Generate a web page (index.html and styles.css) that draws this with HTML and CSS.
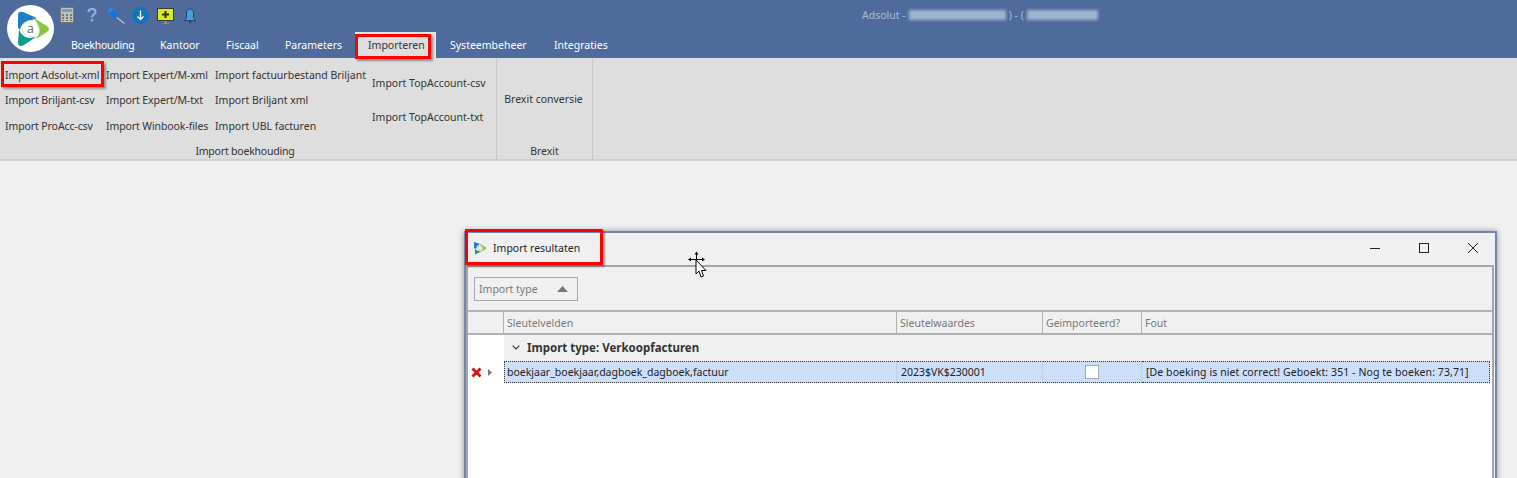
FILE: index.html
```html
<!DOCTYPE html>
<html lang="nl">
<head>
<meta charset="utf-8">
<title>Adsolut</title>
<link rel="stylesheet" href="styles.css">
</head>
<body>
<div class="app">
  <header class="header">
    <div class="logo">
      <svg width="47" height="47" viewBox="0 0 47 47">
        <circle cx="23.500" cy="23.500" r="23.500" fill="#fff"/>
        <path d="M11 10 Q11 6 16 7 L30 13 Q26 15 21 16 Q14 18 13 25 L11 23Z" fill="#1f7fc0"/>
        <path d="M25 12 L40 21 Q44 24 40 27 L29 34 Q34 27 32 22 Q30 16 25 12Z" fill="#8cc63f"/>
        <path d="M12 25 Q15 32 23 33 Q28 33 32 30 L17 40 Q11 43 11 37Z" fill="#0f9b8e"/>
        <circle cx="23.500" cy="23.500" r="8" fill="#fff" stroke="#cfe6e6" stroke-width="1"/>
        <text x="23.500" y="27.500" class="logo-a">a</text>
      </svg>
    </div>
    <div class="header-body">
      <div class="topline">
        <div class="quick">
          <svg class="qi-calc" width="14" height="16" viewBox="0 0 14 16"><rect x=".5" y=".5" width="13" height="15" fill="#c2c2bc" stroke="#77766f"/><rect x="2" y="2" width="10" height="3" fill="#6fa0cf"/><path d="M2 7h2v2H2zM6 7h2v2H6zM10 7h2v2h-2zM2 10h2v2H2zM6 10h2v2H6zM10 10h2v2h-2zM2 13h2v1H2zM6 13h2v1H6zM10 13h2v1h-2z" fill="#77766f"/></svg>
          <svg class="qi-help" width="10" height="14" viewBox="0 0 10 14"><path d="M1.500 4Q1.500 1 5 1q3.500 0 3.500 3C8.500 6.500 5 6.500 5 9.500" fill="none" stroke="#8fb0e0" stroke-width="2.200"/><rect x="3.800" y="11" width="2.400" height="2.400" fill="#8fb0e0"/></svg>
          <svg class="qi-pin" width="18" height="17" viewBox="0 0 18 17"><path d="M9 10l8.500 6.500" stroke="#c0c4cc" stroke-width="1.200"/><path d="M3.500 3.500L9 9" stroke="#1a74d8" stroke-width="5"/><path d="M1 5.500L5.500 1" stroke="#1f8ae8" stroke-width="3"/><path d="M6 12L12 6.500" stroke="#1a74d8" stroke-width="3"/></svg>
          <svg class="qi-down" width="17" height="17" viewBox="0 0 17 17"><circle cx="8.500" cy="8.500" r="8.500" fill="#1273bd"/><path d="M8.500 3.500v9M5.500 9.500l3 3 3-3" fill="none" stroke="#fff" stroke-width="1.400"/></svg>
          <svg class="qi-mon" width="17" height="17" viewBox="0 0 17 17"><rect x=".5" y=".5" width="16" height="12" fill="#d8e82b" stroke="#3d3d2a"/><path d="M8.500 3v7M5 6.500h7" stroke="#2c3418" stroke-width="2"/><path d="M7 13h3v2H7z" fill="#82889a"/><path d="M5 15.500h7" stroke="#82889a"/></svg>
          <svg class="qi-bell" width="12" height="16" viewBox="0 0 12 16"><path d="M6 1Q9.500 1 9.500 6V10L11.500 12.500H.5L2.500 10V6Q2.500 1 6 1Z" fill="#4a9ee0" stroke="#17365f" stroke-width=".8"/><path d="M4.500 13.500h3L6 15.500Z" fill="#17365f"/></svg>
        </div>
        <div class="window-title">
          <span>Adsolut -</span><span class="blur blur-a"></span><span>) - (</span><span class="blur blur-b"></span>
        </div>
      </div>
      <nav class="tabs">
        <span class="tab tab-1">Boekhouding</span>
        <span class="tab tab-2">Kantoor</span>
        <span class="tab tab-3">Fiscaal</span>
        <span class="tab tab-4">Parameters</span>
        <span class="tab tab-active">Importeren<i class="mark mark-tab"></i></span>
        <span class="tab tab-6">Systeembeheer</span>
        <span class="tab tab-7">Integraties</span>
      </nav>
    </div>
  </header>

  <section class="ribbon">
    <div class="group group-import">
      <div class="group-items">
        <div class="col col-1">
          <span class="item item-marked">Import Adsolut-xml<i class="mark mark-item"></i></span>
          <span class="item">Import Briljant-csv</span>
          <span class="item">Import ProAcc-csv</span>
        </div>
        <div class="col col-2">
          <span class="item">Import Expert/M-xml</span>
          <span class="item">Import Expert/M-txt</span>
          <span class="item">Import Winbook-files</span>
        </div>
        <div class="col col-3">
          <span class="item">Import factuurbestand Briljant</span>
          <span class="item">Import Briljant xml</span>
          <span class="item">Import UBL facturen</span>
        </div>
        <div class="col col-4">
          <span class="item">Import TopAccount-csv</span>
          <span class="item">Import TopAccount-txt</span>
        </div>
      </div>
      <div class="group-label">Import boekhouding</div>
    </div>
    <div class="group group-brexit">
      <div class="group-items center"><span class="item">Brexit conversie</span></div>
      <div class="group-label">Brexit</div>
    </div>
  </section>

  <main class="desktop">
    <div class="dialog">
      <div class="dialog-title">
        <svg class="dialog-icon" width="14" height="14" viewBox="0 0 14 14"><path d="M1 1L7 3 4 5 3 8 1 7Z" fill="#1f7fc0"/><path d="M6 2L13 6.500 13 8 8 11 10 7Z" fill="#8cc63f"/><path d="M2 8Q5 11 9 10L2 13.500Z" fill="#0f9b8e"/><circle cx="6.500" cy="7" r="2" fill="#fff" stroke="#8aa" stroke-width=".5"/></svg>
        <span class="dialog-name">Import resultaten</span>
        <div class="controls">
          <svg width="12" height="12" viewBox="0 0 12 12"><path d="M1 6.500h10" stroke="#222" stroke-width="1"/></svg>
          <svg width="12" height="12" viewBox="0 0 12 12"><rect x="1.500" y="1.500" width="9" height="9" fill="none" stroke="#222"/></svg>
          <svg width="12" height="12" viewBox="0 0 12 12"><path d="M1 1l10 10M11 1L1 11" stroke="#222" stroke-width="1"/></svg>
        </div>
        <i class="mark mark-title"></i>
      </div>
      <div class="panel">
        <div class="toolbar">
          <div class="chip">
            <span>Import type</span>
            <svg width="11" height="6" viewBox="0 0 11 6"><path d="M5.500 0L11 6H0Z" fill="#777"/></svg>
          </div>
        </div>
        <div class="grid">
          <div class="grid-row grid-head">
            <div class="cell"></div>
            <div class="cell">Sleutelvelden</div>
            <div class="cell">Sleutelwaardes</div>
            <div class="cell">Geimporteerd?</div>
            <div class="cell">Fout</div>
          </div>
          <div class="grid-group">
            <div class="group-gutter"></div>
            <div class="group-title">
              <svg width="8" height="5" viewBox="0 0 8 5"><path d="M.7.700L4 4 7.300.700" fill="none" stroke="#333" stroke-width="1.200"/></svg>
              <strong>Import type: Verkoopfacturen</strong>
            </div>
          </div>
          <div class="grid-row grid-data">
            <div class="cell gutter">
              <svg width="11" height="11" viewBox="0 0 11 11"><path d="M1.500 1.500l8 8M9.500 1.500l-8 8" stroke="#dc1414" stroke-width="3"/></svg>
              <svg width="4" height="7" viewBox="0 0 4 7"><path d="M0 0l4 3.500L0 7Z" fill="#777"/></svg>
            </div>
            <div class="cell sel first">boekjaar_boekjaar,dagboek_dagboek,factuur</div>
            <div class="cell sel">2023$VK$230001</div>
            <div class="cell sel check"><span class="box"></span></div>
            <div class="cell sel last">[De boeking is niet correct! Geboekt: 351 - Nog te boeken: 73,71]</div>
          </div>
        </div>
      </div>
    </div>
    <svg class="cursor" width="20" height="27" viewBox="0 0 20 27">
      <path d="M9.500 3V9M3 8.500H16" stroke="#000" stroke-width="1"/>
      <path d="M9.500.5L7.500 3.500H11.500ZM1 8.500L4 6.500V10.500ZM18 8.500L15 6.500V10.500Z" fill="#000"/>
      <path d="M9 9V23L12 20 14 26 16.500 25 14.500 19.500H19Z" fill="#fff" stroke="#000"/>
    </svg>
  </main>
</div>
</body>
</html>
```

FILE: styles.css
```css
* { box-sizing: border-box; }
html, body { margin: 0; height: 100%; overflow: hidden; }
body { font-family: "Noto Sans", "Open Sans", sans-serif; font-size: 10.500px; color: #333; background: #f0f0f0; }
.app { width: 1517px; height: 478px; display: flex; flex-direction: column; overflow: hidden; }

.header { height: 58px; background: #4e6b9b; display: flex; flex: none; }
.logo { width: 47px; height: 47px; margin: 5px 0 0 7px; flex: none; }
.logo-a { font-size: 13px; fill: #777; text-anchor: middle; font-family: "Noto Sans", sans-serif; }
.header-body { flex: 1; display: flex; flex-direction: column; margin-left: 6px; }
.topline { height: 33px; display: flex; position: relative; }
.quick { display: flex; align-items: flex-start; padding-top: 7px; width: 140px; flex: none; }
.quick svg { display: block; }
.qi-help { margin: 1px 0 0 13px; }
.qi-pin { margin: 0 0 0 10px; }
.qi-down { margin: 0 0 0 7px; }
.qi-mon { margin: 1px 0 0 8px; }
.qi-bell { margin: 1px 0 0 10px; }
.window-title { margin-left: 662px; padding-top: 8px; display: flex; align-items: flex-start; gap: 3px; color: #a9bcdb; font-size: 10.500px; line-height: 14px; white-space: nowrap; }
.blur { display: block; height: 10px; margin-top: 2px; background: #b4c5e0; filter: blur(1.500px); opacity: .8; }
.blur-a { width: 97px; }
.blur-b { width: 71px; }

.tabs { display: flex; align-items: stretch; height: 25px; color: #fff; margin-left: -1px; }
.tab { display: block; line-height: 25px; white-space: nowrap; position: relative; }
.tab-1 { margin-left: 12px; width: 89px; letter-spacing: -.25px; }
.tab-2 { width: 66px; }
.tab-3 { width: 59px; }
.tab-4 { width: 70px; }
.tab-active { width: 81px; height: 26px; margin-top: -1px; background: #dedede; color: #333; padding-left: 12px; border: 1px solid #e8e8e8; border-bottom: 0; line-height: 25px; }
.tab-6 { width: 104px; margin-left: 14px; }
.tab-7 { width: 60px; }

.mark { position: absolute; display: block; border: 3px solid #f00; box-shadow: 2px 2px 2px rgba(0,0,0,.35); pointer-events: none; }
.mark-tab { left: -1px; top: 1px; width: 76px; height: 25px; }
.mark-item { left: -4px; top: -1.500px; width: 103px; height: 26px; }
.mark-title { left: -1px; top: -4px; width: 138px; height: 36px; }

.ribbon { height: 103px; flex: none; display: flex; background: #dedede; border-bottom: 2px solid #cfcfcf; }
.group { position: relative; display: flex; flex-direction: column; border-right: 1px solid #c8c8c8; }
.group-import { width: 497px; }
.group-brexit { width: 96px; }
.group-items { flex: 1; display: flex; min-height: 0; }
.group-items.center { align-items: center; justify-content: center; padding-right: 2px; }
.group-label { height: 20px; padding-top: 4px; line-height: 16px; text-align: center; }
.group-import .group-label { padding-right: 6px; letter-spacing: -.2px; }
.col { display: flex; flex-direction: column; padding-top: 4.500px; }
.col .item { height: 25.500px; line-height: 25.500px; }
.item { display: block; white-space: nowrap; }
.col-1 .item, .col-2 .item { letter-spacing: -.1px; }
.col .item-marked { position: relative; }
.col-1 { width: 106px; padding-left: 5px; }
.col-2 { width: 109px; }
.col-3 { width: 157px; }
.col-4 { padding-top: 13px; gap: 8px; }

.desktop { flex: 1; position: relative; background: #f0f0f0; overflow: hidden; }
.dialog { position: absolute; left: 464px; top: 70px; width: 1033px; height: 300px; background: #f0f0f0; border: 2px solid #6f88ad; box-shadow: 0 0 6px rgba(0,0,0,.4); }
.dialog-title { height: 32px; display: flex; align-items: center; padding: 0 0 2px 7px; position: relative; color: #222; }
.dialog-name { margin-left: 6px; }
.dialog-icon { flex: none; }
.controls { margin-left: auto; display: flex; gap: 37px; padding-right: 16px; }
.panel { margin: 0 1px 0 0; height: 262px; border: 2px solid #a5a5a5; border-bottom: 0; background: #fff; }
.toolbar { height: 43px; background: #f0f0f0; padding: 10px 0 0 6px; }
.chip { width: 104px; height: 24px; display: flex; align-items: center; justify-content: space-between; padding: 0 9px 0 4px; border: 1px solid #a8a8a8; color: #777; }
.grid { display: flex; flex-direction: column; }
.grid-row { display: grid; grid-template-columns: 36px 393px 146px 99px 1fr; }
.grid-head { height: 25px; background: #f0f0f0; border-top: 2px solid #b2b2b2; border-bottom: 2px solid #b2b2b2; color: #777; }
.grid-head .cell { border-right: 1px solid #b2b2b2; line-height: 23px; padding-left: 3px; white-space: nowrap; }
.grid-head .cell:last-child { border-right: 0; }
.grid-group { height: 26px; display: flex; }
.group-gutter { width: 36px; background: #fff; }
.group-title { flex: 1; background: #f0f0f0; display: flex; align-items: center; gap: 7px; padding: 0 0 2px 8px; font-size: 11.500px; color: #333; }
.grid-data { height: 21px; }
.grid-data .cell { line-height: 20px; white-space: nowrap; }
.gutter { display: flex; align-items: center; padding-left: 3px; gap: 6px; background: #fff; }
.sel { background: #cddff8; border-top: 1px dotted #333; border-bottom: 1px dotted #333; border-right: 1px solid #bfcfe6; padding-left: 4px; color: #222; }
.sel.first { border-left: 1px dotted #333; padding-left: 2px; }
.sel.last { border-right: 1px dotted #333; margin-right: 2px; letter-spacing: .08px; }
.check { display: flex; align-items: center; justify-content: center; padding-left: 0; }
.box { display: block; width: 14px; height: 14px; background: #fff; border: 1px solid #aaa; }

.cursor { position: absolute; left: 687px; top: 90px; }
```
